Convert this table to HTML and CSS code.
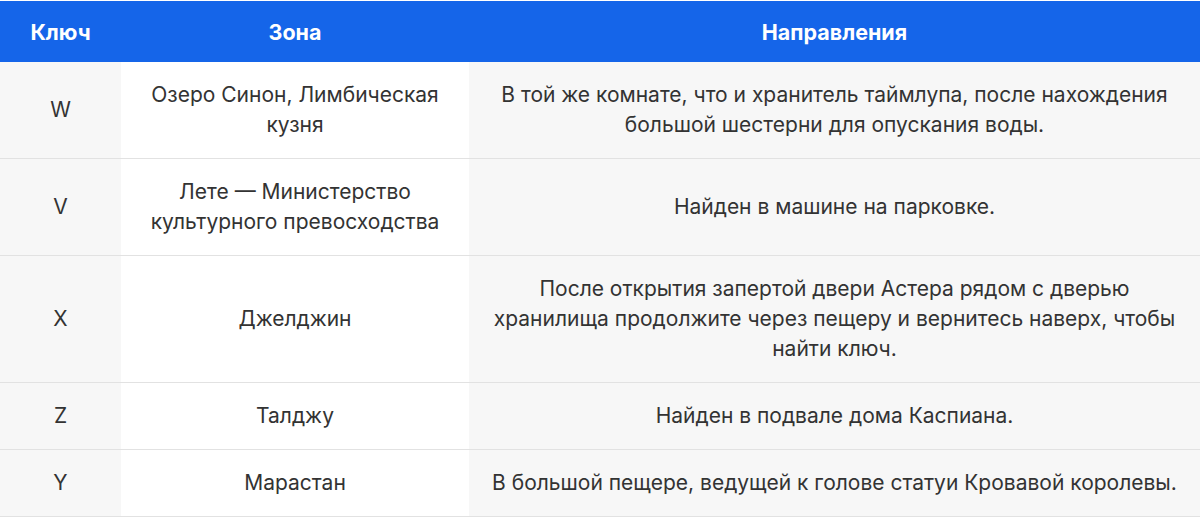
FILE: index.html
```html
<!DOCTYPE html>
<html lang="ru">
<head>
<meta charset="utf-8">
<link rel="stylesheet" href="styles.css">
</head>
<body>
<table class="keys">
  <colgroup>
    <col class="c-key">
    <col class="c-zone">
    <col class="c-dir">
  </colgroup>
  <thead>
    <tr><th>Ключ</th><th>Зона</th><th>Направления</th></tr>
  </thead>
  <tbody>
    <tr><td>W</td><td>Озеро Синон, Лимбическая кузня</td><td>В той же комнате, что и хранитель таймлупа, после нахождения большой шестерни для опускания воды.</td></tr>
    <tr><td>V</td><td>Лете — Министерство культурного превосходства</td><td>Найден в машине на парковке.</td></tr>
    <tr><td>X</td><td>Джелджин</td><td>После открытия запертой двери Астера рядом с дверью хранилища продолжите через пещеру и вернитесь наверх, чтобы найти ключ.</td></tr>
    <tr><td>Z</td><td>Талджу</td><td>Найден в подвале дома Каспиана.</td></tr>
    <tr><td>Y</td><td>Марастан</td><td>В большой пещере, ведущей к голове статуи Кровавой королевы.</td></tr>
  </tbody>
</table>
</body>
</html>
```

FILE: styles.css
```css
html, body {
  margin: 0;
  padding: 0;
  background: #ffffff;
}
body {
  padding-top: 1px;
  font-family: Inter, "Noto Sans", "DejaVu Sans", sans-serif;
}
.keys {
  width: 1200px;
  border-collapse: collapse;
  table-layout: fixed;
}
.c-key { width: 121px; }
.c-zone { width: 348px; }
.c-dir { width: 731px; }
.keys th {
  background: #1565e9;
  color: #ffffff;
  font-weight: 700;
  font-size: 21.5px;
  height: 61px;
  padding: 0 20px;
  text-align: center;
  box-sizing: border-box;
}
.keys td {
  font-size: 21px;
  line-height: 30px;
  color: #333333;
  text-align: center;
  padding: 18px 22px;
  border-bottom: 1px solid #e2e2e2;
  background: #ffffff;
}
.keys td:nth-child(odd) {
  background: #f7f7f7;
}
```
